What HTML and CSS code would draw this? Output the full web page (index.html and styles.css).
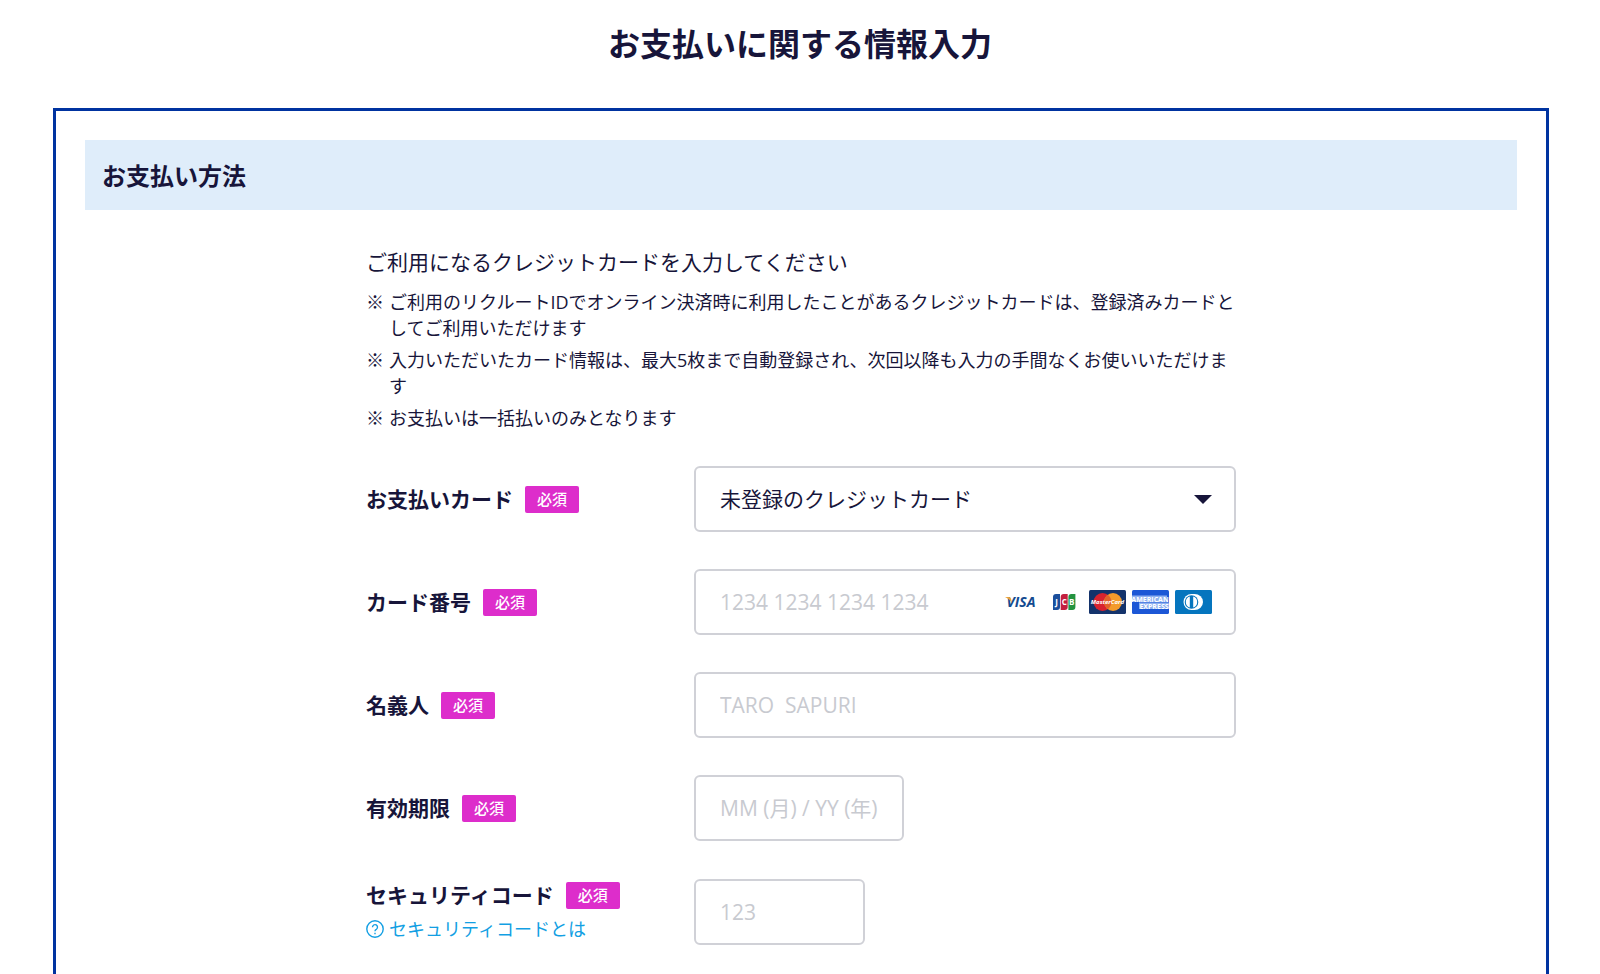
FILE: index.html
```html
<!DOCTYPE html>
<html lang="ja">
<head>
  <meta charset="UTF-8" />
  <meta name="viewport" content="width=device-width, initial-scale=1.0" />
  <title>お支払いに関する情報入力</title>
  <link rel="stylesheet" href="styles.css">
</head>
<body>
  <header>
    <h1>お支払いに関する情報入力</h1>
  </header>

  <main class="frame">
    <h2>お支払い方法</h2>

    <form class="payment">
      <p class="lead">ご利用になるクレジットカードを入力してください</p>
      <ul class="notes">
        <li>ご利用のリクルートIDでオンライン決済時に利用したことがあるクレジットカードは、登録済みカードとしてご利用いただけます</li>
        <li>入力いただいたカード情報は、最大5枚まで自動登録され、次回以降も入力の手間なくお使いいただけます</li>
        <li>お支払いは一括払いのみとなります</li>
      </ul>

      <!-- Card select -->
      <div class="row">
        <div class="label">
          <label for="card">お支払いカード</label>
          <span class="required">必須</span>
        </div>
        <select id="card" class="field">
          <option>未登録のクレジットカード</option>
        </select>
      </div>

      <!-- Card number -->
      <div class="row">
        <div class="label">
          <label for="number">カード番号</label>
          <span class="required">必須</span>
        </div>
        <div class="field number">
          <input type="text" id="number" placeholder="1234 1234 1234 1234" />
          <div class="brands">
            <svg viewBox="0 0 37 24" role="img" aria-label="VISA">
              <text class="visa" x="18" y="17" text-anchor="middle">VISA</text>
              <path d="M2 7h4q1.500 0 2 1.500l1 5Q7 9 2 7z" fill="#e9a33a" />
            </svg>
            <svg viewBox="0 0 37 24" role="img" aria-label="JCB">
              <path d="M10 4h4v13a3 3 0 0 1-3 3H7V7a3 3 0 0 1 3-3z" fill="#1b4f9c" />
              <path d="M17.700 4h4v13a3 3 0 0 1-3 3h-4V7a3 3 0 0 1 3-3z" fill="#c3203f" />
              <path d="M25.400 4h4v13a3 3 0 0 1-3 3h-4V7a3 3 0 0 1 3-3z" fill="#23933f" />
              <text class="jcb" x="10.500" y="15" text-anchor="middle">J</text>
              <text class="jcb" x="18.200" y="15" text-anchor="middle">C</text>
              <text class="jcb" x="25.800" y="15" text-anchor="middle">B</text>
            </svg>
            <svg viewBox="0 0 37 24" role="img" aria-label="MasterCard">
              <rect width="37" height="24" rx="1.500" fill="#14336b" />
              <circle cx="13.500" cy="12" r="9" fill="#d8232f" />
              <circle cx="24" cy="12" r="9" fill="#f39a2b" />
              <path d="M18.750 4.700a9 9 0 0 1 0 14.600a9 9 0 0 1 0-14.600z" fill="#e2622b" />
              <text class="master" x="18.500" y="14" text-anchor="middle">MasterCard</text>
            </svg>
            <svg viewBox="0 0 37 24" role="img" aria-label="American Express">
              <rect width="37" height="24" rx="1.500" fill="#1c57d6" />
              <rect y="5.500" width="35" height="6.500" fill="#8fb0ef" />
              <rect x="7" y="12.500" width="30" height="6.500" fill="#8fb0ef" />
              <text class="amex" x="18" y="11.500" text-anchor="middle">AMERICAN</text>
              <text class="amex" x="22" y="18.500" text-anchor="middle">EXPRESS</text>
            </svg>
            <svg viewBox="0 0 37 24" role="img" aria-label="Diners Club">
              <rect width="37" height="24" rx="1.500" fill="#0575be" />
              <path d="M16.500 4h3a8.500 8 0 0 1 0 16h-3a8 8 0 0 1 0-16z" fill="#fff" />
              <circle cx="16.500" cy="12" r="6.800" fill="#0575be" />
              <path d="M14.800 6.500a5.800 5.800 0 0 0 0 11zM18.200 6.500a5.800 5.800 0 0 1 0 11z" fill="#fff" />
            </svg>
          </div>
        </div>
      </div>

      <!-- Holder -->
      <div class="row">
        <div class="label">
          <label for="holder">名義人</label>
          <span class="required">必須</span>
        </div>
        <input type="text" id="holder" class="field" placeholder="TARO  SAPURI" />
      </div>

      <!-- Expiry -->
      <div class="row">
        <div class="label">
          <label for="expiry">有効期限</label>
          <span class="required">必須</span>
        </div>
        <input type="text" id="expiry" class="field expiry" placeholder="MM (月) / YY (年)" />
      </div>

      <!-- Security code -->
      <div class="row">
        <div>
          <div class="label">
            <label for="code">セキュリティコード</label>
            <span class="required">必須</span>
          </div>
          <a href="#" class="help">
            <svg viewBox="0 0 18 18" aria-hidden="true">
              <circle cx="9" cy="9" r="8.200" />
              <path d="M6.500 7.200a2.500 2.500 0 1 1 3.800 2.100Q9 10 9 11.300M9 12.800v1.400" />
            </svg>
            セキュリティコードとは
          </a>
        </div>
        <input type="text" id="code" class="field code" placeholder="123" />
      </div>
    </form>
  </main>
</body>
</html>
```
FILE: styles.css
```css
* { box-sizing: border-box; }
body {
  font-family: "Open Sans", "Noto Sans CJK JP", sans-serif;
  margin: 0;
  background: #fff;
  color: #17153a;
  min-height: 100vh;
  display: flex;
  flex-direction: column;
}
header {
  padding: 20px 0 40px;
  text-align: center;
}
h1 {
  margin: 0;
  font-size: 32px;
  line-height: 48px;
  font-weight: bold;
}
.frame {
  flex: 1;
  margin: 0 51px 0 53px;
  padding: 29px 29px 24px;
  border: 3px solid #0033a0;
  border-bottom: none;
}
h2 {
  margin: 0;
  padding: 17px 17px 15px;
  background: #dfedfa;
  font-size: 24px;
  line-height: 38px;
}
.payment {
  max-width: 870px;
  margin: 0 auto;
  padding-top: 36px;
}
.lead {
  margin: 0;
  font-size: 21px;
  line-height: 32px;
}
.notes {
  list-style: none;
  margin: 11px 0 35px;
  padding: 0;
  font-size: 18px;
  line-height: 26px;
}
.notes li {
  display: flex;
  margin-bottom: 6px;
}
.notes li::before {
  content: "※";
  flex: 0 0 23px;
}
.row {
  display: grid;
  grid-template-columns: 328px 1fr;
  align-items: center;
  margin-bottom: 37px;
}
.row:last-child {
  margin-bottom: 0;
}
.label {
  display: flex;
  align-items: center;
  gap: 12px;
  font-size: 21px;
  line-height: 34px;
  font-weight: bold;
}
.required {
  padding: 0 12px;
  background: #dd2dcb;
  color: #fff;
  border-radius: 2px;
  font-size: 15px;
  line-height: 27px;
  font-weight: 500;
}
.field {
  width: 100%;
  height: 66px;
  padding: 0 24px;
  border: 2px solid #d0d1d7;
  border-radius: 6px;
  background: #fff;
  color: #17153a;
  font-family: inherit;
  font-size: 21px;
}
select.field {
  appearance: none;
  background: url("data:image/svg+xml,%3Csvg xmlns='http://www.w3.org/2000/svg' width='18' height='9'%3E%3Cpath d='M0 0h18l-9 9z' fill='%2317153a'/%3E%3C/svg%3E") no-repeat right 22px center;
}
input::placeholder {
  color: #c8cad0;
  opacity: 1;
}
.number {
  display: flex;
  align-items: center;
  padding-right: 22px;
}
.number input {
  flex: 1;
  min-width: 0;
  padding: 0;
  border: none;
  font: inherit;
}
.brands {
  display: flex;
  gap: 6px;
}
.brands svg {
  width: 37px;
  height: 24px;
}
.brands text {
  font-family: "Open Sans", sans-serif;
  font-weight: bold;
}
.visa {
  font-size: 14px;
  font-style: italic;
  fill: #134a90;
}
.jcb {
  font-size: 8px;
  fill: #fff;
}
.master {
  font-size: 6px;
  font-style: italic;
  fill: #fff;
}
.amex {
  font-size: 7px;
  fill: #fff;
}
.expiry {
  width: 210px;
}
.code {
  width: 171px;
}
.help {
  display: flex;
  align-items: center;
  gap: 5px;
  color: #139fe3;
  font-size: 18px;
  line-height: 34px;
  text-decoration: none;
}
.help svg {
  width: 18px;
  height: 18px;
  fill: none;
  stroke: currentColor;
  stroke-width: 1.4;
}
```
